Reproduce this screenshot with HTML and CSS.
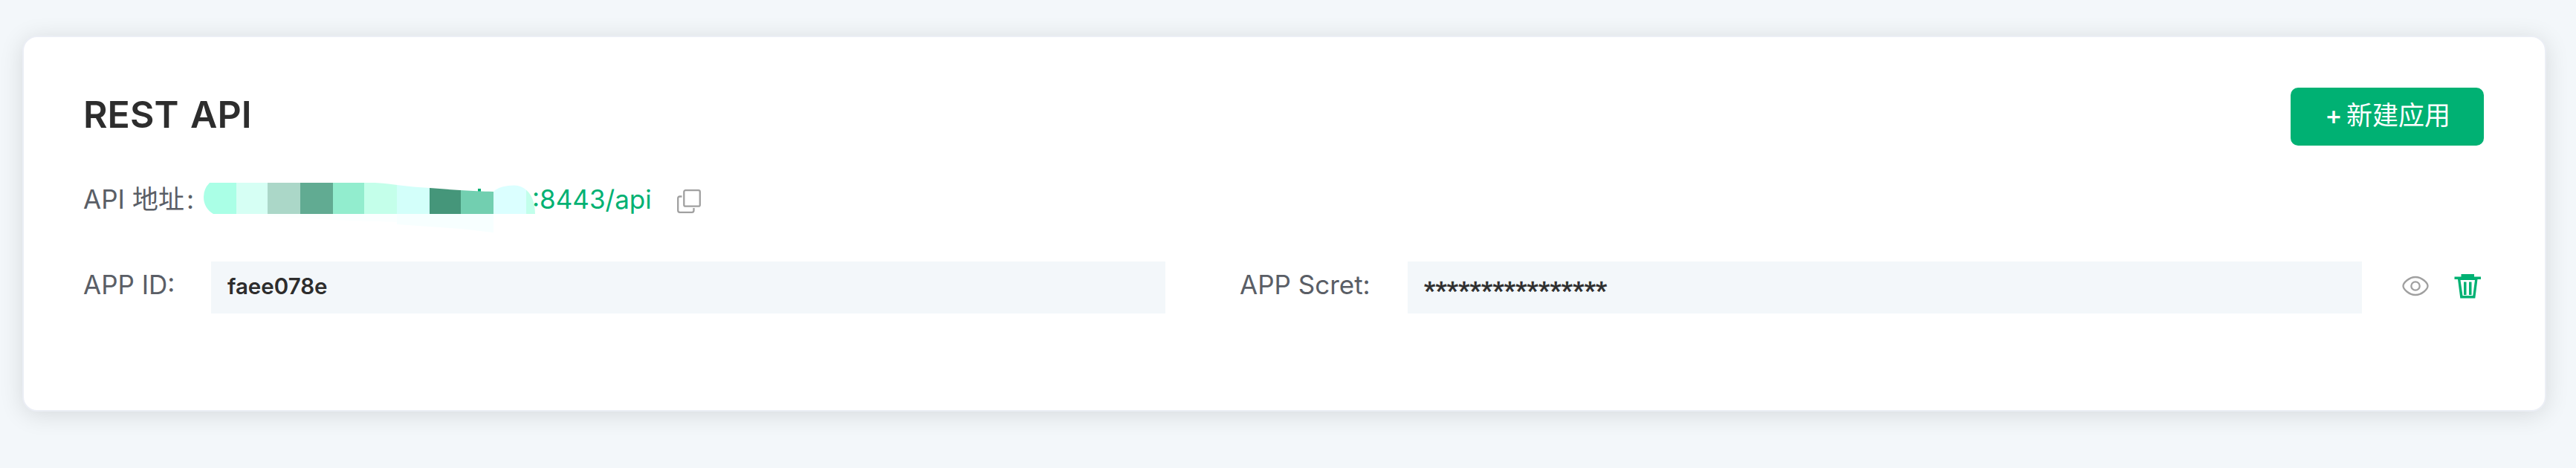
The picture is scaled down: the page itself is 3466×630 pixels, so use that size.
FILE: index.html
```html
<!DOCTYPE html>
<html lang="zh-CN">
<head>
<meta charset="utf-8">
<title>REST API</title>
<link rel="stylesheet" href="styles.css">
</head>
<body>
<main class="card">
  <header class="card-header">
    <h1 class="title">REST API</h1>
    <button class="create" type="button"><span class="plus">+</span><span class="create-text">新建应用</span></button>
  </header>
  <section class="address">
    <span class="label address-label"><span class="address-api">API</span><span class="address-cn">地址</span><span class="address-colon">:</span></span>
    <svg class="mask" width="446" height="74" viewBox="274 240 446 74">
      <defs>
        <clipPath id="brush"><path d="M282 246H505C525 247 545 251 578 253C605 255 625 257 664 258Q672 249.500 692 249.500C708 250 720 264 720 288H287Q274 280 274 265Q274 254 282 246Z"/></clipPath>
      </defs>
      <path fill="#fcfffe" d="M360 288H448V296L360 291Z"/>
      <path fill="#fbffff" d="M448 288H534V299L448 296Z"/>
      <path fill="#f7ffff" d="M534 288H664V313L620 308L534 302Z"/>
      <path fill="#00b173" d="M643 254h4v6h-4z"/>
      <g clip-path="url(#brush)" shape-rendering="crispEdges">
        <path fill="#aaffe6" d="M274 240h44v48h-44z"/>
        <path fill="#d6fff4" d="M318 240h42v48h-42z"/>
        <path fill="#abd7c8" d="M360 240h44v48h-44z"/>
        <path fill="#61ab92" d="M404 240h44v48h-44z"/>
        <path fill="#92edce" d="M448 240h42v48h-42z"/>
        <path fill="#c4ffea" d="M490 240h44v48h-44z"/>
        <path fill="#d3fffa" d="M534 240h44v48h-44z"/>
        <path fill="#45967a" d="M578 240h42v48h-42z"/>
        <path fill="#72cfb0" d="M620 240h44v48h-44z"/>
        <path fill="#dbffff" d="M664 240h44v48h-44z"/>
        <path fill="#c2ffeb" d="M708 240h12v48h-12z"/>
      </g>
    </svg>
    <span class="url">:8443/api</span>
    <svg class="copy" width="32" height="32" viewBox="0 0 32 32" fill="none" stroke="#a0a0a0" stroke-width="2.300">
      <rect x="9.300" y="1.200" width="21.500" height="21.500" rx="2"/>
      <path d="M6.500 9.500H3.700Q1.200 9.500 1.200 12V28.300Q1.200 30.800 3.700 30.800H20Q22.500 30.800 22.500 28.300V25"/>
    </svg>
  </section>
  <section class="credentials">
    <span class="label id-label">APP ID:</span>
    <div class="field"><span class="id-value">faee078e</span></div>
    <span class="label secret-label">APP Scret:</span>
    <div class="field secret-field"><span class="secret-value">****************</span></div>
    <svg class="eye" width="36" height="28" viewBox="0 0 36 28" fill="none" stroke="#a0a0a0" stroke-width="2.300">
      <path d="M1.500 14C1.500 10 9 2 18 2S34.500 10 34.500 14S27 26 18 26S1.500 18 1.500 14Z"/>
      <circle cx="18" cy="14" r="5.700"/>
    </svg>
    <svg class="trash" width="36" height="33" viewBox="0 0 36 33">
      <path fill="#00b173" fill-rule="evenodd" d="M9.500 0H27V3.500H36V7H31.500L28.300 32.500H8.300L5 7H0.500V3.500H9.500ZM8.500 8L11.500 29H25.300L28 8ZM13 10.500H16.500V28H13ZM20 10.500H23.500V28H20Z"/>
    </svg>
  </section>
</main>
</body>
</html>
```
FILE: styles.css
```css
* { box-sizing: border-box; }
body {
  margin: 0;
  padding: 48px 40px 76px 30px;
  height: 630px;
  overflow: hidden;
  background: #f3f7fa;
  font-family: Inter, "Noto Sans CJK SC", sans-serif;
  color: #2d2d2d;
}
.card {
  height: 506px;
  padding: 68px 82px 0 80px;
  background: #fff;
  border: 2px solid #ebeef5;
  border-radius: 20px;
  box-shadow: 0 4px 32px rgba(0, 0, 0, .12);
}
.card-header { display: flex; justify-content: space-between; height: 78px; }
.title {
  margin: 0;
  font-size: 50px;
  line-height: 73px;
  font-weight: 600;
  word-spacing: 3px;
  white-space: nowrap;
}
.create {
  display: flex;
  align-items: center;
  width: 260px;
  height: 78px;
  padding: 0 0 4px 41px;
  border: 0;
  border-radius: 10px;
  background: #00b173;
  color: #fff;
  font: 400 35px/74px Inter, "Noto Sans CJK SC", sans-serif;
}
.plus { width: 34px; font-size: 35px; font-weight: 500; line-height: 72px; }
.create-text { white-space: nowrap; }
.address { display: flex; align-items: center; height: 74px; margin-top: 44px; }
.label { flex: none; color: #5a5e66; font-size: 35px; line-height: 54px; white-space: nowrap; }
.address-label { display: flex; width: 162px; margin-bottom: 19px; }
.address-api { width: 66px; }
.address-cn { width: 73px; }
.mask { flex: none; }
.url { width: 195px; margin: 0 0 19px -4px; color: #00b173; font-size: 35px; line-height: 54px; white-space: nowrap; }
.copy { display: block; margin-bottom: 12px; }
.credentials { display: flex; align-items: center; height: 70px; margin-top: 38px; }
.id-label, .secret-label { margin-bottom: 8px; }
.id-label { width: 172px; }
.secret-label { width: 226px; }
.field {
  flex: none;
  width: 1284px;
  height: 70px;
  padding-left: 22px;
  background: #f3f7fa;
  font-size: 29.500px;
  font-weight: 560;
  line-height: 67px;
}
.field + .secret-label { margin-left: 100px; }
.secret-field {
  font: 400 39.600px/80px "Liberation Sans", Arial, sans-serif;
}
.secret-value { -webkit-text-stroke: .6px #2d2d2d; }
.eye { margin: 0 0 4px 54px; }
.trash { margin: 0 0 4px 34px; }
```
